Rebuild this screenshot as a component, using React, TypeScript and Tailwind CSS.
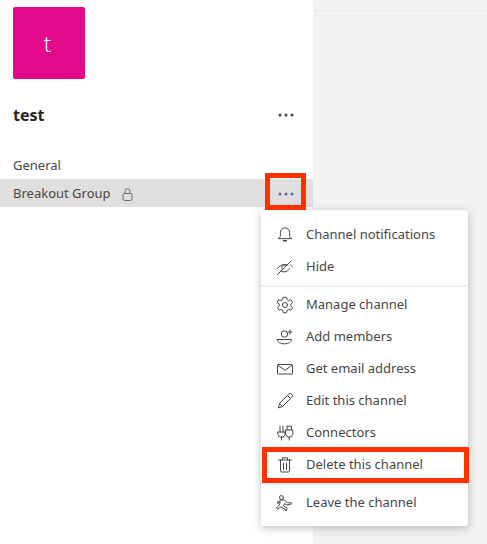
import type { ReactNode } from "react";

const stroke = {
  fill: "none",
  stroke: "#484644",
  strokeWidth: 1,
  strokeLinecap: "round" as const,
  strokeLinejoin: "round" as const,
};

const Icon = ({ children }: { children: ReactNode }) => (
  <svg width="18" height="18" viewBox="0 0 18 18" {...stroke}>
    {children}
  </svg>
);

const BellIcon = () => (
  <Icon>
    <path d="M2.500 12.500c1.400-.6 1.900-1.700 1.900-3.200V6.500a4.600 4.600 0 0 1 9.200 0v2.800c0 1.500.5 2.600 1.900 3.200z" />
    <path d="M7.500 14.800h3" strokeWidth="1.500" />
  </Icon>
);

const HideIcon = () => (
  <Icon>
    <path d="M1.500 10.500C3.500 7.800 6 6.500 9 6.500c1 0 2 .2 3 .5" />
    <path d="M5 13c1.200.7 2.500 1 4 .8 1.900-.2 3.300-1.200 4.500-3" />
    <path d="M6.500 11.500A2.800 2.800 0 0 1 10 7.200" />
    <path d="M1.500 16.500 15 3" />
    <path d="m14.500 7 2 1.800" />
  </Icon>
);

const GearIcon = () => (
  <Icon>
    <path d="M7.400 1.300h3.200l.5 2.300 1.500.9 2.300-.7 1.600 2.700-1.700 1.600v1.800l1.700 1.600-1.600 2.700-2.300-.7-1.500.9-.5 2.300H7.400l-.5-2.300-1.500-.9-2.300.7-1.600-2.700 1.700-1.600V8.100L1 6.500l1.600-2.700 2.300.7 1.500-.9z" />
    <circle cx="9" cy="9" r="2.500" />
  </Icon>
);

const AddMemberIcon = () => (
  <Icon>
    <circle cx="8.500" cy="6" r="3.200" />
    <path d="M1.500 11.500h14c0 2.800-3 4.300-7 4.300s-7-1.500-7-4.300z" />
    <path d="M14 2v4M12 4h4" />
  </Icon>
);

const MailIcon = () => (
  <Icon>
    <rect x="1.500" y="4.500" width="15" height="9.500" rx="1" />
    <path d="m1.800 5.200 7.200 5 7.200-5" />
  </Icon>
);

const PencilIcon = () => (
  <Icon>
    <path d="M2.500 15.500 3.500 11.500 12.800 2.200a1.800 1.800 0 0 1 3 3L6.500 14.500z" />
    <path d="m3.500 11.500 3 3M11.500 3.500l3 3" />
  </Icon>
);

const ConnectorIcon = () => (
  <Icon>
    <path d="M4 2v6M7 2v6M2 8h7v2.500L7.500 13h-4L2 10.500zM5.500 13v3" />
    <path d="M11 6V2.200h4.500V6M9.800 6h7v4.500L15 13h-3.500l-1.700-2.500zM13.200 13v3" />
  </Icon>
);

const TrashIcon = () => (
  <Icon>
    <path d="M2.500 4h13M6.500 4V1.800h5V4" />
    <path d="M4.500 4v10.800c0 .7.500 1.200 1.200 1.200h6.600c.7 0 1.200-.5 1.200-1.200V4" />
    <path d="M7.500 7v6.500M10.500 7v6.500" />
  </Icon>
);

const LeaveIcon = () => (
  <Icon>
    <circle cx="5.500" cy="3.500" r="2" />
    <path d="M1.500 8 5 6h3.500l3 3 3.500-.5.500 1.500-4.500 1-2.500-1.500-1 2.500 3.500 2-.5 2.500h-1.500l-.2-1.500-4-2-3 2-1.500-1 3-3 1-3-2.500 1.200z" />
  </Icon>
);

const MoreDots = ({ color }: { color: string }) => (
  <svg width="16" height="4" viewBox="0 0 16 4" fill={color}>
    <circle cx="2" cy="2" r="1.500" />
    <circle cx="8" cy="2" r="1.500" />
    <circle cx="14" cy="2" r="1.500" />
  </svg>
);

const MenuItem = ({ icon, label }: { icon: ReactNode; label: string }) => (
  <div className="flex h-8 items-center pl-[15px]">
    <span className="flex w-[30px] shrink-0">{icon}</span>
    <span className="text-[13px] text-[#484644]">{label}</span>
  </div>
);

export default function App() {
  return (
    <div className="relative flex h-[544px] w-[487px] overflow-hidden bg-white font-['Noto_Sans',sans-serif] text-[#252423]">
      <aside className="w-[313px] shrink-0 bg-white pt-[7px]">
        <div className="ml-[13px] flex h-[72px] w-[72px] items-center justify-center rounded-[2px] bg-[#e3098b] pr-[3px] text-[22px] font-light text-white">
          t
        </div>
        <div className="mt-[24px] flex h-6 items-center justify-between pl-[13px] pr-[19px]">
          <span className="text-[16px] font-bold">test</span>
          <MoreDots color="#484644" />
        </div>
        <div className="mt-[24px] flex h-7 items-center pl-[13px] pt-[2px] text-[13px] text-[#484644]">General</div>
        <div className="flex h-7 items-center justify-between bg-[#e1dfdd] pl-[13px] pr-[19px] pt-[2px] text-[13px] text-[#484644]">
          <span className="flex items-center gap-[11px]">
            Breakout Group
            <svg width="11" height="13" viewBox="0 0 11 13" fill="none" stroke="#6e6c6a">
              <rect x="1" y="5.500" width="9" height="7" rx="1.500" />
              <path d="M3 5.500V3.200a2.500 2.500 0 0 1 5 0v2.300" />
            </svg>
          </span>
          <MoreDots color="#6264a7" />
        </div>
      </aside>
      <main className="flex-1 bg-[#f3f2f1]">
        <div className="mt-[10px] h-px bg-[#ebe9e8]" />
      </main>

      <div className="absolute left-[261px] top-[210px] w-[207px] rounded-[3px] bg-white pt-[9px] shadow-[0_2px_10px_rgba(0,0,0,0.25)]">
        <MenuItem icon={<BellIcon />} label="Channel notifications" />
        <MenuItem icon={<HideIcon />} label="Hide" />
        <div className="my-[2px] h-[2px] bg-[#f1f0ef]" />
        <MenuItem icon={<GearIcon />} label="Manage channel" />
        <MenuItem icon={<AddMemberIcon />} label="Add members" />
        <MenuItem icon={<MailIcon />} label="Get email address" />
        <MenuItem icon={<PencilIcon />} label="Edit this channel" />
        <MenuItem icon={<ConnectorIcon />} label="Connectors" />
        <MenuItem icon={<TrashIcon />} label="Delete this channel" />
        <div className="my-[2px] h-[2px] bg-[#f1f0ef]" />
        <MenuItem icon={<LeaveIcon />} label="Leave the channel" />
        <div className="h-[7px]" />
      </div>

      <div className="absolute left-[265px] top-[173px] h-[37px] w-[41px] border-[5px] border-[#ff3000]" />
      <div className="absolute left-[262px] top-[447px] h-[36px] w-[207px] border-[5px] border-[#ff3000]" />
    </div>
  );
}
